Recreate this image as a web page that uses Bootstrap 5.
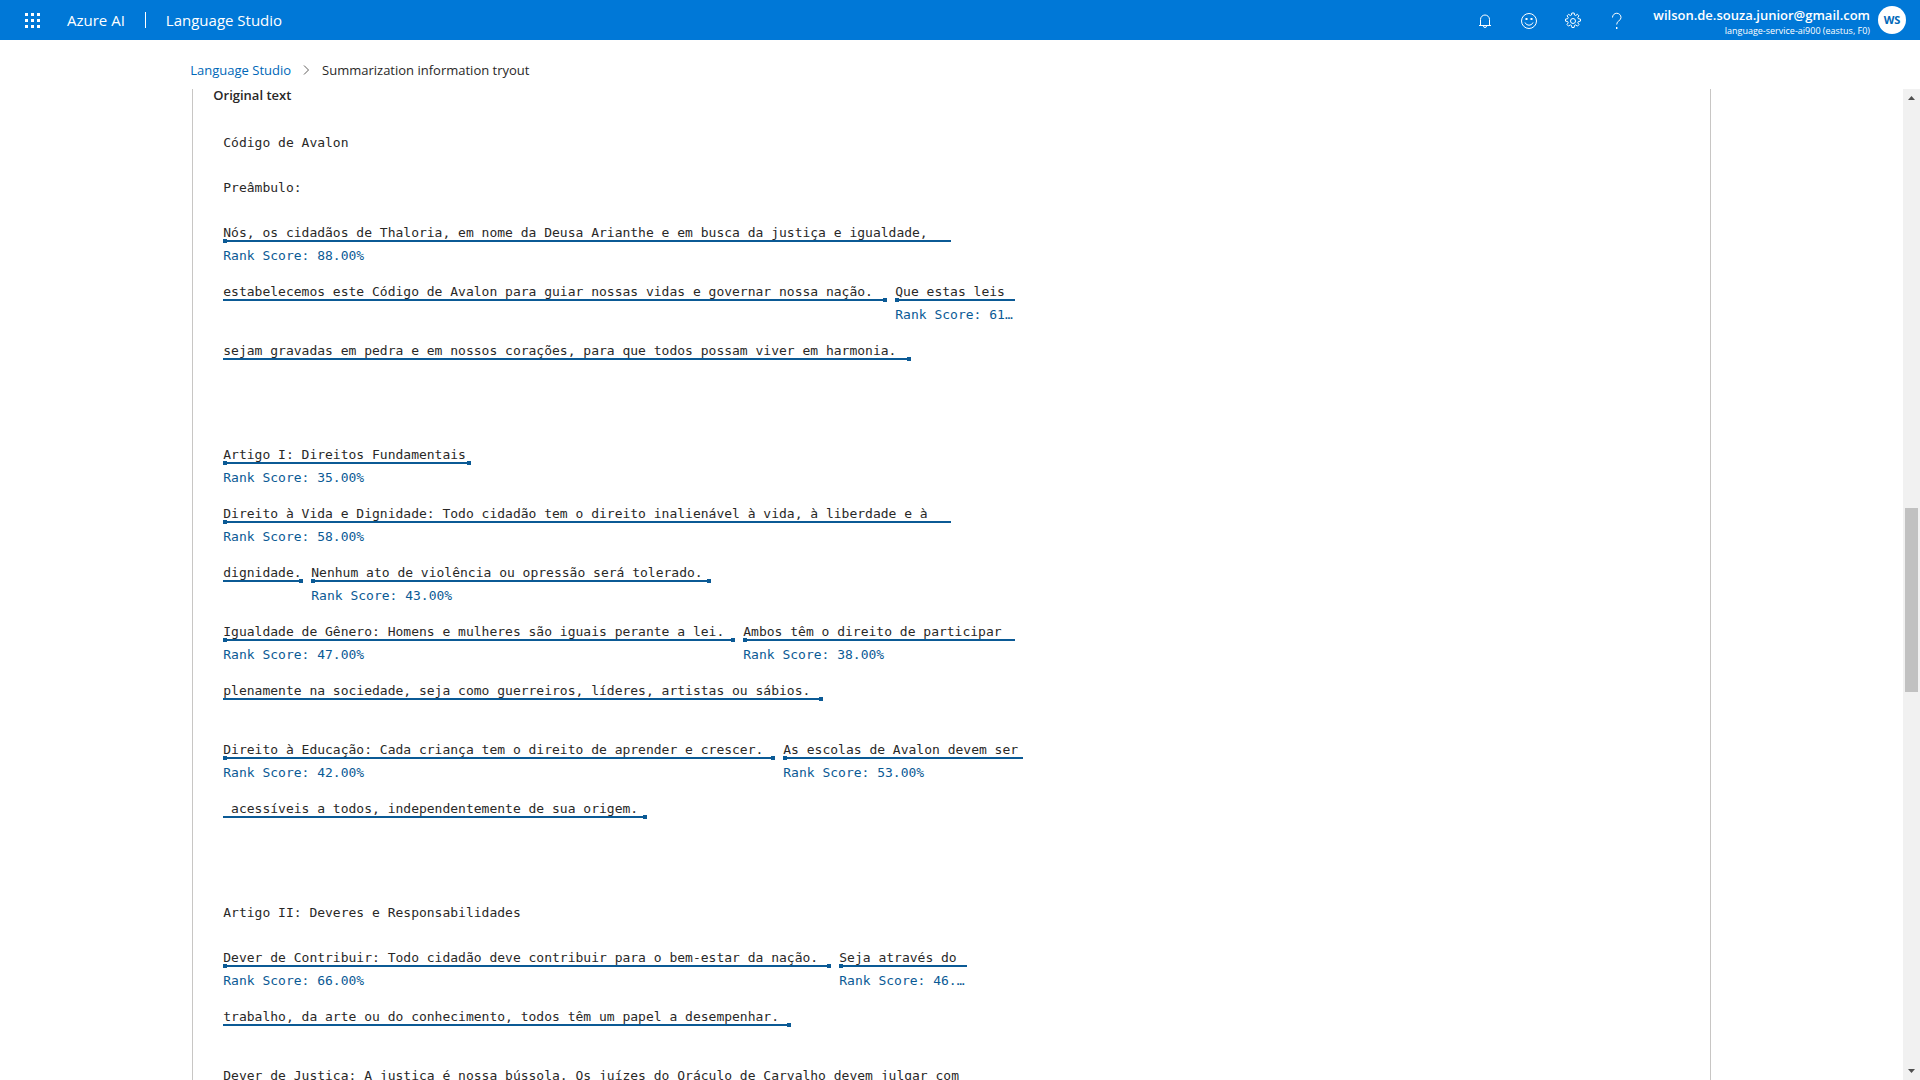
<!DOCTYPE html>
<html lang="en">
<head>
<meta charset="utf-8">
<meta name="viewport" content="width=device-width, initial-scale=1">
<title>Language Studio - Summarization</title>
<link href="https://cdn.jsdelivr.net/npm/bootstrap@5.3.0/dist/css/bootstrap.min.css" rel="stylesheet">
<style>
body { font-family: "Open Sans", "Noto Sans", sans-serif; font-size: 13px; color: #292827; background: #fff; }
.topbar { height: 40px; background: #0078d7; color: #fff; }
.topbar a { color: #fff; text-decoration: none; }
.waffle-btn, .tool-btn { background: none; border: 0; padding: 0; color: #fff; height: 40px; }
.waffle-btn { width: 50px; padding-left: 15px; margin-right: 17px; }
.tool-btn { width: 44px; }
.brand { font-size: 15px; font-weight: 400; line-height: 20px; }
.brand-rule { width: 1px; height: 16px; background: #fff; margin: 0 20px; }
.account { line-height: 16px; padding-top: 6px; margin-left: 14px; }
.account-mail { font-size: 13px; font-weight: 600; }
.account-res { font-size: 9px; }
.avatar-dot { width: 28px; height: 28px; border-radius: 50%; background: #fff; color: #0067b8; font-size: 11px; font-weight: 700; margin-right: 14px; }
.page-col { width: 80%; }
.crumbs { height: 49px; padding: 20px 17px 0 0; line-height: 20px; }
.crumbs a { color: #0067b8; text-decoration: none; }
.panel { border-left: 1px solid #c8c6c4; border-right: 1px solid #c8c6c4; padding: 0 20px; margin: 0 2px; }
.panel h2 { font-size: 13px; font-weight: 600; line-height: 12px; margin-bottom: 18px; }
.doc { --cell: 8px; padding-left: 10px; font-family: "DejaVu Sans Mono", monospace; font-size: 13px; }
.ln { height: 45px; padding-top: 14px; line-height: 19px; white-space: pre; }
.ln-seg { height: 59px; gap: var(--cell); }
.seg { width: calc(var(--n) * var(--cell)); }
.seg-text { position: relative; height: 19px; border-bottom: 2px solid #0b5a95; }
.from::before, .to::after { content: ""; position: absolute; top: 16px; width: 4px; height: 4px; background: #0b5a95; }
.from::before { left: 0; }
.to::after { right: 0; }
.rank { margin-top: 5px; line-height: 18px; color: #0b5a95; overflow: hidden; text-overflow: ellipsis; }
.sbar { width: 17px; background: #f1f1f1; }
.sbar-thumb { width: 13px; height: 184px; margin-top: 30px; background: #c1c1c1; }
.sbar svg { height: 17px; width: 17px; }
</style>
<script src="https://cdn.jsdelivr.net/npm/bootstrap@5.3.0/dist/js/bootstrap.bundle.min.js"></script>
</head>
<body class="vh-100 d-flex flex-column overflow-hidden">
<header class="topbar d-flex align-items-center flex-shrink-0">
  <button class="waffle-btn d-flex align-items-center justify-content-center" aria-label="Apps">
    <svg width="15" height="15" fill="currentColor" shape-rendering="crispEdges"><path d="M0 0h3v3H0zM6 0h3v3H6zM12 0h3v3h-3zM0 6h3v3H0zM6 6h3v3H6zM12 6h3v3h-3zM0 12h3v3H0zM6 12h3v3H6zM12 12h3v3h-3z"/></svg>
  </button>
  <a class="brand" href="#">Azure AI</a>
  <span class="brand-rule"></span>
  <a class="brand" href="#">Language Studio</a>
  <div class="d-flex ms-auto">
    <button class="tool-btn" aria-label="Notifications"><svg width="16" height="16" viewBox="0 0 16 16" fill="none" stroke="currentColor"><path d="M2 12.500h12M3.500 12.500V6.500a4.500 4.500 0 0 1 9 0v6M6.500 13a1.500 1.500 0 0 0 3 0"/></svg></button>
    <button class="tool-btn" aria-label="Feedback"><svg width="18" height="18" viewBox="0 0 18 18" fill="none" stroke="currentColor"><circle cx="9" cy="9" r="7.500"/><path d="M5 10.500a4.300 4.300 0 0 0 8 0"/><path fill="currentColor" stroke="none" d="M5.500 6h2v2h-2zM10.500 6h2v2h-2z"/></svg></button>
    <button class="tool-btn" aria-label="Settings"><svg width="18" height="18" viewBox="0 0 18 18" fill="none" stroke="currentColor"><circle cx="9" cy="9" r="2.500"/><path d="M7.800 1h2.400l.3 2 1.200.5 1.700-1.200 1.500 1.500-1.100 1.700.5 1.200 2.200.4v2l-2.200.5-.5 1.200 1.200 1.800-1.500 1.500-1.800-1.200-1.200.5-.4 2.100H7.900l-.4-2.100-1.200-.5-1.800 1.200L3 12.600l1.200-1.800-.5-1.200-2.200-.5V7.100l2.200-.4.5-1.200L3.100 3.800l1.500-1.500 1.700 1.200L7.500 3z"/></svg></button>
    <button class="tool-btn" aria-label="Help"><svg width="18" height="18" viewBox="0 0 18 18" fill="none" stroke="currentColor"><path d="M4.500 5.500a4 4 0 0 1 8.500 0c0 3.500-4.300 3-4.300 7"/><path fill="currentColor" stroke="none" d="M8 15h1.400v2H8z"/></svg></button>
  </div>
  <div class="account text-end me-2">
    <div class="account-mail">wilson.de.souza.junior@gmail.com</div>
    <div class="account-res">language-service-ai900 (eastus, F0)</div>
  </div>
  <div class="avatar-dot d-flex align-items-center justify-content-center">WS</div>
</header>
<nav class="crumbs flex-shrink-0" aria-label="Breadcrumb">
  <ol class="page-col mx-auto mb-0 list-unstyled d-flex align-items-center">
    <li><a href="#">Language Studio</a></li>
    <li class="d-flex px-2 mx-1" aria-hidden="true"><svg width="7" height="10" viewBox="0 0 7 10" fill="none" stroke="#605e5c"><path d="M1 .5 5.500 5 1 9.500"/></svg></li>
    <li aria-current="page">Summarization information tryout</li>
  </ol>
</nav>
<div class="flex-grow-1 d-flex overflow-hidden">
  <main class="flex-grow-1 overflow-hidden">
    <div class="page-col mx-auto">
      <section class="panel">
        <h2>Original text</h2>
        <div class="doc">
          <div class="ln">Código de Avalon</div>
          <div class="ln">Preâmbulo:</div>
          <div class="ln ln-seg d-flex"><div class="seg" style="--n:91"><div class="seg-text from">Nós, os cidadãos de Thaloria, em nome da Deusa Arianthe e em busca da justiça e igualdade, </div><div class="rank">Rank Score: 88.00%</div></div></div>
          <div class="ln ln-seg d-flex"><div class="seg" style="--n:83"><div class="seg-text to">estabelecemos este Código de Avalon para guiar nossas vidas e governar nossa nação.</div></div><div class="seg" style="--n:15"><div class="seg-text from">Que estas leis </div><div class="rank">Rank Score: 61.00%</div></div></div>
          <div class="ln ln-seg d-flex"><div class="seg" style="--n:86"><div class="seg-text to">sejam gravadas em pedra e em nossos corações, para que todos possam viver em harmonia.</div></div></div>
          <div class="ln"></div>
          <div class="ln ln-seg d-flex"><div class="seg" style="--n:31"><div class="seg-text from to">Artigo I: Direitos Fundamentais</div><div class="rank">Rank Score: 35.00%</div></div></div>
          <div class="ln ln-seg d-flex"><div class="seg" style="--n:91"><div class="seg-text from">Direito à Vida e Dignidade: Todo cidadão tem o direito inalienável à vida, à liberdade e à </div><div class="rank">Rank Score: 58.00%</div></div></div>
          <div class="ln ln-seg d-flex"><div class="seg" style="--n:10"><div class="seg-text to">dignidade.</div></div><div class="seg" style="--n:50"><div class="seg-text from to">Nenhum ato de violência ou opressão será tolerado.</div><div class="rank">Rank Score: 43.00%</div></div></div>
          <div class="ln ln-seg d-flex"><div class="seg" style="--n:64"><div class="seg-text from to">Igualdade de Gênero: Homens e mulheres são iguais perante a lei.</div><div class="rank">Rank Score: 47.00%</div></div><div class="seg" style="--n:34"><div class="seg-text from">Ambos têm o direito de participar </div><div class="rank">Rank Score: 38.00%</div></div></div>
          <div class="ln ln-seg d-flex"><div class="seg" style="--n:75"><div class="seg-text to">plenamente na sociedade, seja como guerreiros, líderes, artistas ou sábios.</div></div></div>
          <div class="ln ln-seg d-flex"><div class="seg" style="--n:69"><div class="seg-text from to">Direito à Educação: Cada criança tem o direito de aprender e crescer.</div><div class="rank">Rank Score: 42.00%</div></div><div class="seg" style="--n:30"><div class="seg-text from">As escolas de Avalon devem ser</div><div class="rank">Rank Score: 53.00%</div></div></div>
          <div class="ln ln-seg d-flex"><div class="seg" style="--n:53"><div class="seg-text to"> acessíveis a todos, independentemente de sua origem.</div></div></div>
          <div class="ln"></div>
          <div class="ln">Artigo II: Deveres e Responsabilidades</div>
          <div class="ln ln-seg d-flex"><div class="seg" style="--n:76"><div class="seg-text from to">Dever de Contribuir: Todo cidadão deve contribuir para o bem-estar da nação.</div><div class="rank">Rank Score: 66.00%</div></div><div class="seg" style="--n:16"><div class="seg-text from">Seja através do </div><div class="rank">Rank Score: 46.00%</div></div></div>
          <div class="ln ln-seg d-flex"><div class="seg" style="--n:71"><div class="seg-text to">trabalho, da arte ou do conhecimento, todos têm um papel a desempenhar.</div></div></div>
          <div class="ln ln-seg d-flex"><div class="seg" style="--n:94"><div class="seg-text from">Dever de Justiça: A justiça é nossa bússola. Os juízes do Oráculo de Carvalho devem julgar com</div></div></div>
        </div>
      </section>
    </div>
  </main>
  <div class="sbar d-flex flex-column align-items-center justify-content-between flex-shrink-0" aria-hidden="true">
    <svg viewBox="0 0 17 17"><path fill="#505050" d="M5 11h7L8.500 7z"/></svg>
    <div class="sbar-thumb"></div>
    <svg viewBox="0 0 17 17"><path fill="#505050" d="M5 6h7l-3.500 4z"/></svg>
  </div>
</div>
</body>
</html>
